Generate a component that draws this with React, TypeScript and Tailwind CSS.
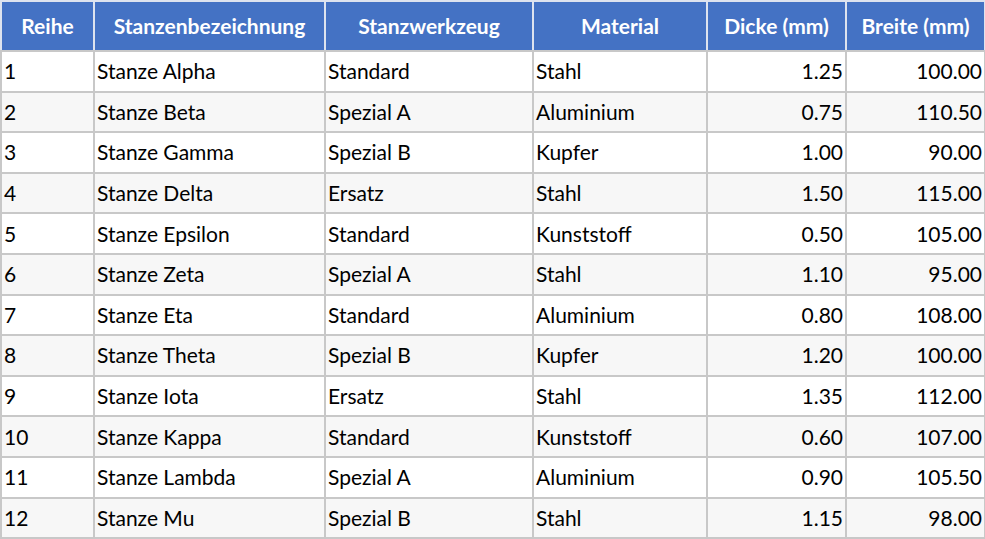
import React from "react";

const rows: [number, string, string, string, string, string][] = [
  [1, "Stanze Alpha", "Standard", "Stahl", "1.25", "100.00"],
  [2, "Stanze Beta", "Spezial A", "Aluminium", "0.75", "110.50"],
  [3, "Stanze Gamma", "Spezial B", "Kupfer", "1.00", "90.00"],
  [4, "Stanze Delta", "Ersatz", "Stahl", "1.50", "115.00"],
  [5, "Stanze Epsilon", "Standard", "Kunststoff", "0.50", "105.00"],
  [6, "Stanze Zeta", "Spezial A", "Stahl", "1.10", "95.00"],
  [7, "Stanze Eta", "Standard", "Aluminium", "0.80", "108.00"],
  [8, "Stanze Theta", "Spezial B", "Kupfer", "1.20", "100.00"],
  [9, "Stanze Iota", "Ersatz", "Stahl", "1.35", "112.00"],
  [10, "Stanze Kappa", "Standard", "Kunststoff", "0.60", "107.00"],
  [11, "Stanze Lambda", "Spezial A", "Aluminium", "0.90", "105.50"],
  [12, "Stanze Mu", "Spezial B", "Stahl", "1.15", "98.00"],
];

const headers = ["Reihe", "Stanzenbezeichnung", "Stanzwerkzeug", "Material", "Dicke (mm)", "Breite (mm)"];

export default function App() {
  return (
    <div className="w-[985px] h-[539px] bg-white overflow-hidden" style={{ fontFamily: "Lato, 'Noto Sans', sans-serif" }}>
      <table className="border-collapse table-fixed w-[984px] text-[21px] text-black">
        <colgroup>
          <col className="w-[93px]" />
          <col className="w-[231px]" />
          <col className="w-[208px]" />
          <col className="w-[174px]" />
          <col className="w-[139px]" />
          <col className="w-[139px]" />
        </colgroup>
        <thead>
          <tr className="bg-[#4472c4]">
            {headers.map((h) => (
              <th
                key={h}
                className="h-[50px] p-0 border-2 border-[#dde3ef] border-b-[#c8c8c8] text-white font-bold text-[21px] text-center leading-[22px]"
              >
                {h}
              </th>
            ))}
          </tr>
        </thead>
        <tbody>
          {rows.map((r, i) => (
            <tr key={r[0]} className={i % 2 === 1 ? "bg-[#f7f7f7]" : "bg-white"}>
              <td className="h-[40.6px] px-[2px] py-0 border-2 border-[#c8c8c8] text-left leading-[22px]">{r[0]}</td>
              <td className="h-[40.6px] px-[2px] py-0 border-2 border-[#c8c8c8] text-left leading-[22px]">{r[1]}</td>
              <td className="h-[40.6px] px-[2px] py-0 border-2 border-[#c8c8c8] text-left leading-[22px]">{r[2]}</td>
              <td className="h-[40.6px] px-[2px] py-0 border-2 border-[#c8c8c8] text-left leading-[22px]">{r[3]}</td>
              <td className="h-[40.6px] px-[2px] py-0 border-2 border-[#c8c8c8] text-right leading-[22px]">{r[4]}</td>
              <td className="h-[40.6px] px-[2px] py-0 border-2 border-[#c8c8c8] text-right leading-[22px]">{r[5]}</td>
            </tr>
          ))}
        </tbody>
      </table>
    </div>
  );
}
